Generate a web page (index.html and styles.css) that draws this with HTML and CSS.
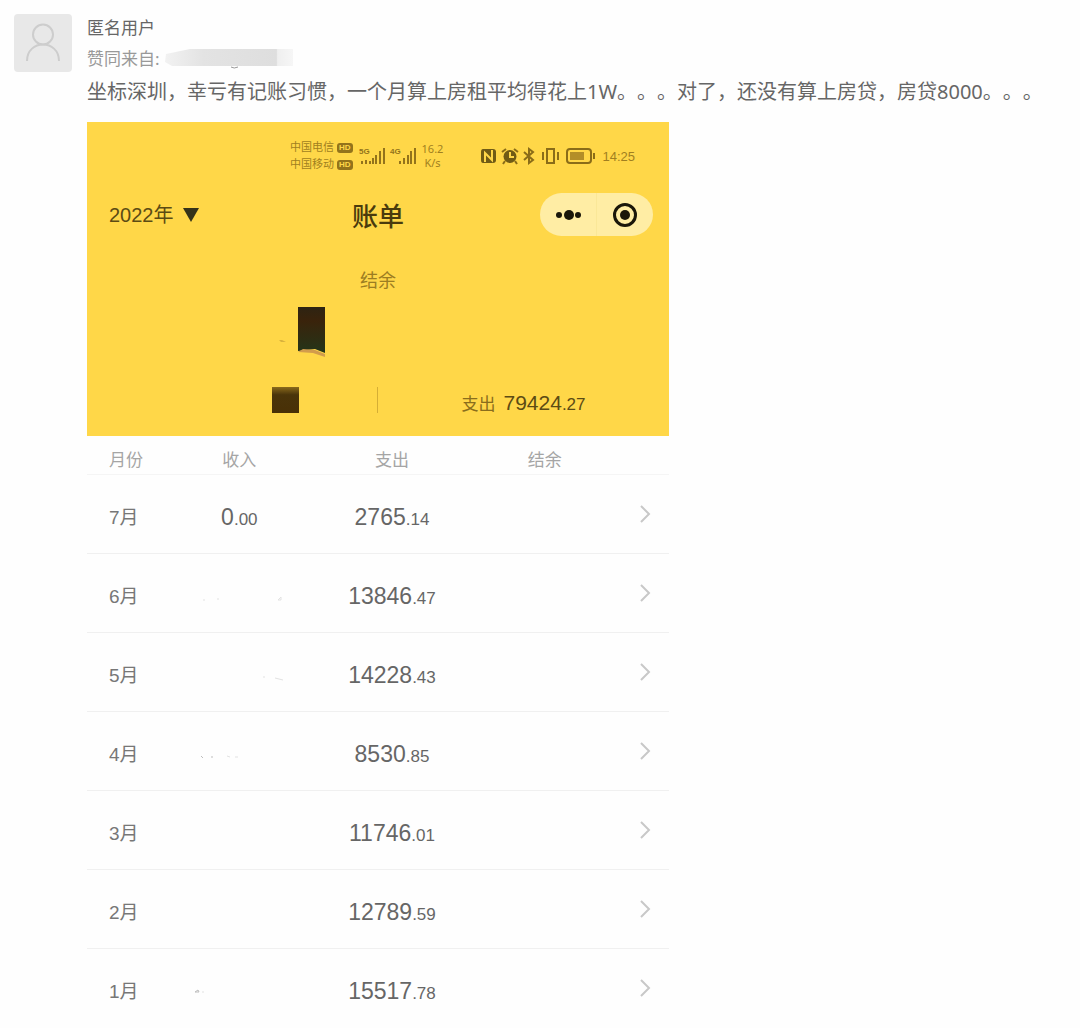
FILE: index.html
```
<!DOCTYPE html>
<html lang="zh-CN">
<head>
    <meta charset="UTF-8">
    <meta name="viewport" content="width=device-width, initial-scale=1.0">
    <title>匿名用户的回答</title>
    <link rel="stylesheet" href="styles.css">
</head>
<body>
    <article class="answer">
        <svg class="avatar" viewBox="0 0 58 58" aria-hidden="true">
            <circle cx="29" cy="20.500" r="10"/>
            <path d="M13 47 C13 25 45 25 45 47"/>
        </svg>

        <div class="answer-body">
            <div class="author">匿名用户</div>
            <div class="agree">
                <span>赞同来自:</span>
                <svg class="agree-mask" viewBox="0 0 130 20" aria-hidden="true">
                    <defs>
                        <linearGradient id="maskFade">
                            <stop offset="0" stop-color="#f2f2f2"/>
                            <stop offset="0.3" stop-color="#e3e3e3"/>
                            <stop offset="0.87" stop-color="#dedede"/>
                            <stop offset="0.88" stop-color="#efefef"/>
                            <stop offset="1" stop-color="#f6f6f6"/>
                        </linearGradient>
                    </defs>
                    <path d="M2 5 L26 0 H129 V17 H8 L1 13 Z" fill="url(#maskFade)"/>
                    <path d="M67 18 Q70 20 74 18" fill="none" stroke="#999"/>
                </svg>
            </div>
            <p class="comment">坐标深圳，幸亏有记账习惯，一个月算上房租平均得花上1W。。。对了，还没有算上房贷，房贷8000。。。</p>

            <section class="bill">
                <header class="bill-header">
                    <div class="status-bar">
                        <div class="status-left">
                            <div class="carriers">
                                <div class="carrier">中国电信<span class="hd">HD</span></div>
                                <div class="carrier">中国移动<span class="hd">HD</span></div>
                            </div>
                            <svg class="signals" viewBox="0 0 57 20" aria-hidden="true">
                                <text x="0" y="8">5G</text>
                                <path d="M2 15h2v3H2zM6 14h2v4H6zM10 15h2v3h-2zM13 12h2v6h-2zM16 9h2v9h-2zM20 5h2v13h-2zM24 2h2v16h-2z"/>
                                <text x="31" y="8">4G</text>
                                <path d="M40 15h2v3h-2zM44 12h2v6h-2zM48 9h2v9h-2zM51 5h2v13h-2zM55 2h2v16h-2z"/>
                            </svg>
                            <div class="speed">16.2<br>K/s</div>
                        </div>
                        <div class="status-right">
                            <svg class="status-icons" viewBox="0 0 116 18" aria-hidden="true">
                                <!-- nfc -->
                                <path class="solid" d="M3 2H13Q16 2 16 5V13Q16 16 13 16H3Q1 16 1 13V5Q1 2 3 2Z"/>
                                <path class="cut" d="M5 15V6L12 13V3"/>
                                <!-- alarm -->
                                <circle class="solid" cx="30" cy="9.500" r="6.500"/>
                                <path class="line" d="M22 5l4-3M38 5l-4-3M25 14l-2 3M35 14l2 3"/>
                                <path class="cut" d="M30 5v5h4"/>
                                <!-- bluetooth -->
                                <path class="line" d="M44 5l9 8-4 3V2l4 3-9 8"/>
                                <!-- vibrate -->
                                <path class="line" d="M67 2h7v14h-7zM63 5v8M78 5v8"/>
                                <!-- battery -->
                                <rect class="line" x="87" y="2" width="24" height="14" rx="3"/>
                                <rect class="charge" x="90" y="5" width="14" height="8"/>
                                <path class="line" d="M114 6v6"/>
                            </svg>
                            <span class="clock">14:25</span>
                        </div>
                    </div>

                    <div class="nav">
                        <div class="year">
                            <select class="year-select" aria-label="年份">
                                <option>2022年</option>
                            </select>
                            <svg class="year-arrow" viewBox="0 0 16 14" aria-hidden="true">
                                <path d="M0 0H16L8 14Z"/>
                            </svg>
                        </div>
                        <h1 class="title">账单</h1>
                        <div class="capsule">
                            <button type="button" class="capsule-btn" aria-label="更多">
                                <svg width="26" height="26" viewBox="0 0 26 26">
                                    <circle cx="4" cy="13" r="3"/>
                                    <circle cx="14" cy="13" r="5"/>
                                    <circle cx="23" cy="13" r="3"/>
                                </svg>
                            </button>
                            <button type="button" class="capsule-btn" aria-label="关闭">
                                <svg width="26" height="26" viewBox="0 0 26 26">
                                    <circle class="ring" cx="13" cy="13" r="10.500"/>
                                    <circle cx="13" cy="13" r="5"/>
                                </svg>
                            </button>
                        </div>
                    </div>

                    <div class="balance-label">结余</div>
                    <div class="balance">
                        <svg class="balance-mask" viewBox="0 0 46 50" aria-hidden="true">
                            <defs>
                                <linearGradient id="ink" x2="0" y2="1">
                                    <stop offset="0" stop-color="#2e2413"/>
                                    <stop offset="0.3" stop-color="#3a230b"/>
                                    <stop offset="1" stop-color="#243519"/>
                                </linearGradient>
                            </defs>
                            <path d="M0 33l2 2 5 0-4-2z" fill="#d9b23c"/>
                            <path d="M19 0H46V46L36 42 19 44Z" fill="url(#ink)"/>
                            <path d="M19 45L24 42 36 43 46 47V50L34 46Z" fill="#d29c4c"/>
                        </svg>
                    </div>
                    <div class="totals">
                        <div class="total-income"><span class="income-mask"></span></div>
                        <div class="total-expense">
                            <span class="total-label">支出</span>
                            <span class="total-amount">79424<small>.27</small></span>
                        </div>
                    </div>
                </header>

                <table class="months">
                    <thead>
                        <tr>
                            <th class="month">月份</th>
                            <th>收入</th>
                            <th>支出</th>
                            <th>结余</th>
                            <th class="more"></th>
                        </tr>
                    </thead>
                    <tbody>
                        <tr>
                            <td class="month">7月</td>
                            <td>0<small>.00</small></td>
                            <td>2765<small>.14</small></td>
                            <td></td>
                            <td class="more"><a href="#" aria-label="7月明细"><svg viewBox="0 0 12 20"><path d="M2 2l8 8-8 8"/></svg></a></td>
                        </tr>
                        <tr>
                            <td class="month">6月</td>
                            <td><svg class="trace" viewBox="0 0 100 20"><path d="M14 16h2M28 15h2M89 16l3-3v3z"/></svg></td>
                            <td>13846<small>.47</small></td>
                            <td></td>
                            <td class="more"><a href="#" aria-label="6月明细"><svg viewBox="0 0 12 20"><path d="M2 2l8 8-8 8"/></svg></a></td>
                        </tr>
                        <tr>
                            <td class="month">5月</td>
                            <td><svg class="trace" viewBox="0 0 100 20"><path d="M74 14h2M86 15l8 2"/></svg></td>
                            <td>14228<small>.43</small></td>
                            <td></td>
                            <td class="more"><a href="#" aria-label="5月明细"><svg viewBox="0 0 12 20"><path d="M2 2l8 8-8 8"/></svg></a></td>
                        </tr>
                        <tr>
                            <td class="month">4月</td>
                            <td><svg class="trace" viewBox="0 0 100 20"><path class="dark" d="M12 14l2 2M22 15h2"/><path d="M38 14l3 1M46 15h3"/></svg></td>
                            <td>8530<small>.85</small></td>
                            <td></td>
                            <td class="more"><a href="#" aria-label="4月明细"><svg viewBox="0 0 12 20"><path d="M2 2l8 8-8 8"/></svg></a></td>
                        </tr>
                        <tr>
                            <td class="month">3月</td>
                            <td></td>
                            <td>11746<small>.01</small></td>
                            <td></td>
                            <td class="more"><a href="#" aria-label="3月明细"><svg viewBox="0 0 12 20"><path d="M2 2l8 8-8 8"/></svg></a></td>
                        </tr>
                        <tr>
                            <td class="month">2月</td>
                            <td></td>
                            <td>12789<small>.59</small></td>
                            <td></td>
                            <td class="more"><a href="#" aria-label="2月明细"><svg viewBox="0 0 12 20"><path d="M2 2l8 8-8 8"/></svg></a></td>
                        </tr>
                        <tr>
                            <td class="month">1月</td>
                            <td><svg class="trace" viewBox="0 0 100 20"><path class="dark" d="M6 13l3-2 1 2z"/><path d="M13 13h2"/></svg></td>
                            <td>15517<small>.78</small></td>
                            <td></td>
                            <td class="more"><a href="#" aria-label="1月明细"><svg viewBox="0 0 12 20"><path d="M2 2l8 8-8 8"/></svg></a></td>
                        </tr>
                    </tbody>
                </table>
            </section>
        </div>
    </article>
</body>
</html>
```
FILE: styles.css
```
* {
    margin: 0;
    padding: 0;
    box-sizing: border-box;
}

body {
    font-family: 'Noto Sans', 'Noto Sans CJK SC', sans-serif;
    background: #fefefe;
    color: #666;
}

.answer {
    display: flex;
    align-items: flex-start;
    gap: 15px;
    padding: 14px 0 0 14px;
}

.avatar {
    flex: none;
    width: 58px;
    height: 58px;
    border-radius: 4px;
    background: #e8e8e8;
    fill: none;
    stroke: #cdcdcd;
    stroke-width: 2;
}

.answer-body {
    flex: 1;
    min-width: 0;
}

.author {
    font-size: 17px;
    line-height: 28px;
}

.agree {
    display: flex;
    align-items: center;
    gap: 4px;
    font-size: 17px;
    line-height: 34px;
    color: #999;
}

.agree-mask {
    width: 130px;
    height: 20px;
}

.comment {
    font-size: 20px;
    line-height: 32px;
    text-spacing-trim: space-all;
}

.bill {
    width: 100%;
    max-width: 582px;
    margin-top: 14px;
    background: #fefefe;
    font-family: 'Liberation Sans', 'Noto Sans CJK SC', sans-serif;
}

/* yellow header */
.bill-header {
    padding: 16px 0 18px;
    background: #ffd748;
    color: #5c4b14;
}

.status-bar {
    display: flex;
    justify-content: space-between;
    align-items: center;
    height: 36px;
    padding: 0 34px 0 203px;
    color: #a17f20;
}

.status-left,
.status-right {
    display: flex;
    align-items: center;
    gap: 6px;
}

.carrier {
    display: flex;
    align-items: center;
    gap: 3px;
    font-size: 11px;
    line-height: 17px;
}

.hd {
    padding: 0 2px;
    border-radius: 3px;
    background: #93731b;
    color: #ffd748;
    font-size: 8px;
    font-weight: bold;
    line-height: 10px;
}

.signals {
    width: 57px;
    height: 20px;
    fill: #93731b;
    font-size: 8px;
    font-weight: bold;
}

.speed {
    font-family: 'Noto Sans', sans-serif;
    font-size: 11px;
    line-height: 14px;
    text-align: center;
}

.status-icons {
    width: 116px;
    height: 18px;
    fill: none;
}

.status-icons .solid {
    fill: #705b15;
}

.status-icons .line {
    stroke: #8a6c18;
    stroke-width: 2;
}

.status-icons .cut {
    stroke: #ffd748;
    stroke-width: 2;
}

.status-icons .charge {
    fill: #b38e28;
}

.clock {
    font-size: 13px;
}

.nav {
    display: grid;
    grid-template-columns: 1fr auto 1fr;
    align-items: center;
    height: 43px;
    margin-top: 19px;
    padding: 0 16px;
}

.year {
    display: flex;
    align-items: center;
    gap: 9px;
    padding-left: 6px;
}

.year-select {
    appearance: none;
    border: none;
    background: none;
    color: inherit;
    font-family: inherit;
    font-size: 20px;
}

.year-arrow {
    width: 16px;
    height: 14px;
    fill: #353319;
}

.title {
    color: #4a3b0d;
    font-size: 26px;
    font-weight: 500;
}

.capsule {
    display: flex;
    justify-self: end;
    width: 113px;
    height: 43px;
    border-radius: 22px;
    background: #ffeda4;
}

.capsule-btn {
    flex: 1;
    display: flex;
    align-items: center;
    justify-content: center;
    border: none;
    background: none;
    fill: #1b1709;
    cursor: pointer;
}

.capsule-btn + .capsule-btn {
    border-left: 1px solid #fae798;
}

.capsule-btn .ring {
    fill: none;
    stroke: #1b1709;
    stroke-width: 3;
}

.balance-label {
    margin-top: 32px;
    color: #9c7d22;
    font-size: 18px;
    line-height: 26px;
    text-align: center;
}

.balance {
    display: flex;
    justify-content: flex-end;
    width: 50%;
    margin-top: 13px;
    padding-right: 53px;
}

.balance-mask {
    width: 46px;
    height: 50px;
}

.totals {
    display: grid;
    grid-template-columns: 1fr 1fr;
    align-items: center;
    margin-top: 25px;
}

.total-income {
    display: flex;
    justify-content: flex-end;
    padding-right: 78px;
    border-right: 1px solid #d5ae35;
}

.income-mask {
    width: 27px;
    height: 26px;
    background: linear-gradient(#8a6a1c, #4a340a 30%, #493006);
}

.total-expense {
    display: flex;
    align-items: baseline;
    justify-content: center;
    gap: 8px;
    padding-top: 8px;
    line-height: 26px;
}

.total-label {
    color: #8a6d1c;
    font-size: 17px;
}

.total-amount {
    font-size: 21px;
}

.total-amount small {
    font-size: 17px;
}

/* monthly list */
.months {
    width: 100%;
    table-layout: fixed;
    border-collapse: collapse;
}

.months th {
    height: 38px;
    padding-top: 13px;
    border-bottom: 1px solid #f5f5f5;
    color: #a5a5a5;
    font-size: 17px;
    font-weight: normal;
    line-height: 24px;
}

.months td {
    height: 79px;
    padding-top: 7px;
    border-bottom: 1px solid #f0f0f0;
    color: #666;
    font-size: 23px;
    text-align: center;
}

.months tr:last-child td {
    border-bottom: none;
}

.months small {
    font-size: 17px;
}

.months .month {
    width: 76px;
    padding-left: 22px;
    text-align: left;
    white-space: nowrap;
}

.months td.month {
    padding-top: 3px;
    color: #777;
    font-size: 19px;
}

.months .more {
    width: 48px;
    padding: 0;
}

.more a {
    display: flex;
    justify-content: center;
}

.more svg {
    width: 12px;
    height: 20px;
    fill: none;
    stroke: #c8c8c8;
    stroke-width: 2;
}

.trace {
    width: 100px;
    height: 20px;
    fill: none;
    stroke: #e2e2e2;
}

.trace .dark {
    stroke: #bdbdbd;
}
```
